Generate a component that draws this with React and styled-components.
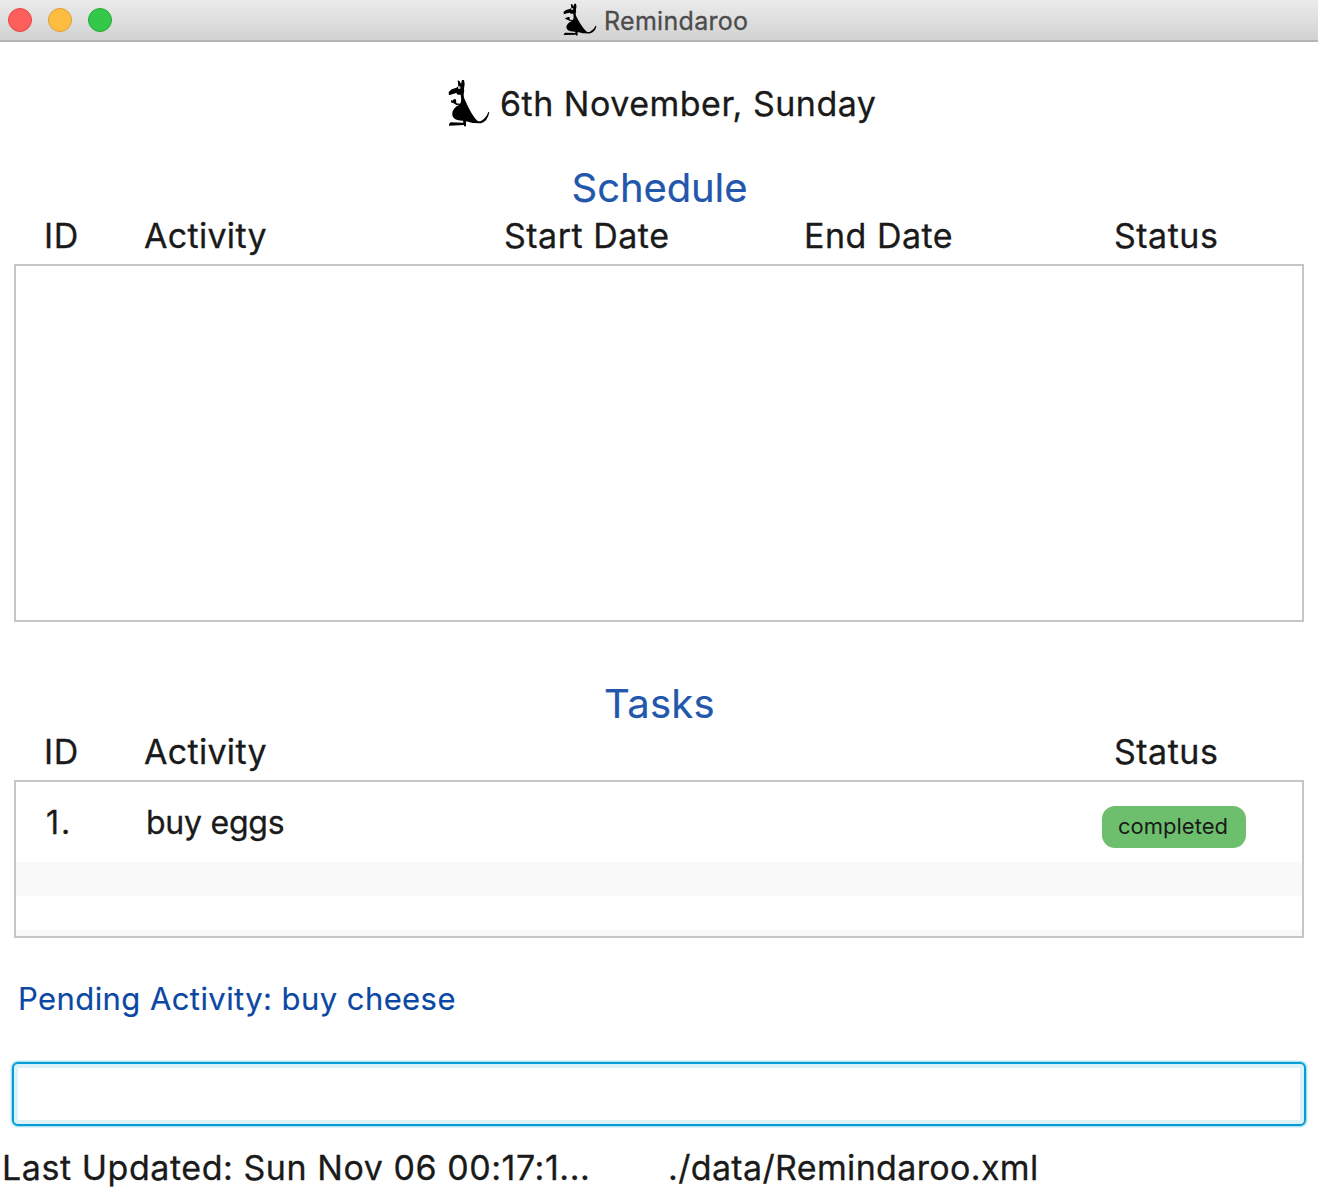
import React from "react";
import styled, { createGlobalStyle } from "styled-components";

const GlobalStyle = createGlobalStyle`
  * { box-sizing: border-box; }
  body {
    margin: 0;
    background: #fff;
    color: #1a1a1a;
    font-family: Inter, "Liberation Sans", sans-serif;
    font-weight: 400;
  }
`;

const Window = styled.div`
  width: 1318px;
  height: 1188px;
  display: flex;
  flex-direction: column;
  overflow: hidden;
  background: #fff;
`;

const TitleBar = styled.header`
  flex: none;
  height: 42px;
  display: grid;
  grid-template-columns: 563px 1fr;
  background: linear-gradient(#ebebeb, #d2d2d2);
  border-bottom: 2px solid #b4b4b4;
`;

const Lights = styled.div`
  display: flex;
  align-items: center;
  height: 40px;
  gap: 16px;
  padding-left: 8px;
`;

const Light = styled.span`
  width: 24px;
  height: 24px;
  border-radius: 50%;
  background: ${(p) => p.$fill};
  border: 1px solid ${(p) => p.$ring};
`;

const WindowTitle = styled.div`
  display: flex;
  align-items: flex-start;
  gap: 7px;
`;

const TitleIcon = styled.span`
  padding-top: 3px;
`;

const Label = styled.span`
  white-space: pre;
  font-size: ${(p) => p.$size || 34}px;
  line-height: ${(p) => p.$line || 42}px;
  letter-spacing: ${(p) => (p.$track === undefined ? 0.5 : p.$track)}px;
  color: ${(p) => p.$color || "inherit"};
  -webkit-text-stroke: ${(p) => (p.$stroke === undefined ? 0.3 : p.$stroke)}px currentColor;
`;

const DateRow = styled.div`
  flex: none;
  height: 121px;
  display: flex;
  padding: 37px 0 0 448px;
  gap: 10px;
`;

const Section = styled.section`
  flex: none;
  height: ${(p) => p.$height}px;
  display: flex;
  flex-direction: column;
`;

const SectionTitle = styled.h2`
  margin: 0;
  height: 51px;
  padding-left: 1px;
  text-align: center;
  font-size: 40px;
  line-height: 50px;
  font-weight: inherit;
  letter-spacing: ${(p) => p.$track}px;
  color: #2257ab;
  -webkit-text-stroke: 0.2px currentColor;
`;

const Columns = styled.div`
  display: grid;
  grid-template-columns: 100px 360px 300px 310px 1fr;
  height: 50px;
  padding: 1px 0 0 44px;
`;

const List = styled.div`
  height: ${(p) => p.$height}px;
  margin: 0 14px;
  border: 2px solid #c6c6c6;
  background: #fff;
  display: flex;
  flex-direction: column;
  overflow: hidden;
`;

const Item = styled.div`
  flex: none;
  height: 80px;
  display: grid;
  grid-template-columns: 100px 956px 1fr;
  padding: 20px 0 0 30px;
`;

const Stripe = styled.div`
  flex: none;
  height: 34px;
  background: ${(p) => (p.$shaded ? "#f9f9f9" : "#fff")};
`;

const Badge = styled.span`
  width: 144px;
  height: 42px;
  margin-top: 4px;
  padding-left: 16px;
  border-radius: 13px;
  background: #6dbf6d;
`;

const Pending = styled.div`
  flex: none;
  height: 84px;
  padding: 0 0 0 18px;
`;

const Command = styled.input`
  flex: none;
  width: 1294px;
  height: 64px;
  margin: 0 12px;
  padding: 0 18px;
  border: 2px solid #039ed3;
  border-radius: 6px;
  outline: none;
  background: #fff;
  font: inherit;
  font-size: 34px;
  box-shadow: 0 0 0 1px #a9def0, 0 0 0 2px #e0f4fa, inset 0 0 0 4px #ddf1f9;
`;

const Footer = styled.footer`
  flex: none;
  height: 62px;
  display: grid;
  grid-template-columns: 666px 1fr;
  padding: 21px 0 0 2px;
`;

const RooSvg = styled.svg`
  flex: none;
  display: block;
`;

function Roo({ width, height }) {
  return (
    <RooSvg width={width} height={height} viewBox="24 20 126 144" preserveAspectRatio="none">
      <path d="M55 42L53 24L59 27L63 35L66 23L72 23L74 35L72 49Q74 57 71 65L72 76Q80 95 89 112Q101 135 112 145Q118 148 124 145Q138 138 145 119L148 120Q143 147 123 153L98 152L78 147L78 162L72 162L72 158L27 160L27 155L32 150L70 151L69 145Q49 145 42 138Q34 130 38 117Q43 104 58 97L49 98L41 93L33 90L33 83L38 85L41 81L48 81L49 93L60 94L63 88Q64 79 62 67L53 67L49 62L39 65L27 69L26 59L35 51L49 46Z" />
      <circle cx="58" cy="46" r="4" fill="#fff" />
      <circle cx="60" cy="46.5" r="2" />
    </RooSvg>
  );
}

export default function App() {
  return (
    <>
      <GlobalStyle />
      <Window>
        <TitleBar>
          <Lights>
            <Light $fill="#fd605c" $ring="#e2484a" />
            <Light $fill="#fdbd40" $ring="#de9d36" />
            <Light $fill="#34c84a" $ring="#27a935" />
          </Lights>
          <WindowTitle>
            <TitleIcon>
              <Roo width={34} height={33} />
            </TitleIcon>
            <Label $size={25} $line={42} $track={0.3} $color="#4c4c4c">Remindaroo</Label>
          </WindowTitle>
        </TitleBar>

        <DateRow>
          <Roo width={42} height={48} />
          <Label $line={50}>6th November, Sunday</Label>
        </DateRow>

        <Section $height={516}>
          <SectionTitle $track={-0.1}>Schedule</SectionTitle>
          <Columns>
            <Label>ID</Label>
            <Label $track={0.3}>Activity</Label>
            <Label>Start Date</Label>
            <Label>End Date</Label>
            <Label>Status</Label>
          </Columns>
          <List $height={358} />
        </Section>

        <Section $height={299}>
          <SectionTitle $track={0.3}>Tasks</SectionTitle>
          <Columns>
            <Label>ID</Label>
            <Label $track={0.3}>Activity</Label>
            <span />
            <span />
            <Label>Status</Label>
          </Columns>
          <List $height={158}>
            <Item>
              <Label $size={32} $track={2}>1.</Label>
              <Label $size={32} $track={-0.25}>buy eggs</Label>
              <Badge>
                <Label $size={22} $line={41} $track={0} $stroke={0}>completed</Label>
              </Badge>
            </Item>
            <Stripe $shaded />
            <Stripe />
            <Stripe $shaded />
          </List>
        </Section>

        <Pending>
          <Label $size={31} $track={0.42} $stroke={0.15} $color="#0b48a3">Pending Activity: buy cheese</Label>
        </Pending>
        <Command aria-label="Command" />
        <Footer>
          <Label $track={0.55}>Last Updated: Sun Nov 06 00:17:1...</Label>
          <Label $track={0.35}>./data/Remindaroo.xml</Label>
        </Footer>
      </Window>
    </>
  );
}
